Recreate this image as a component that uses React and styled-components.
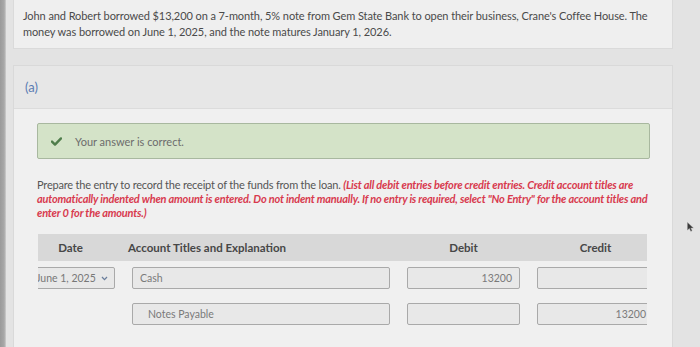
import React from 'react';
import styled, { createGlobalStyle } from 'styled-components';

const GlobalStyle = createGlobalStyle`
  html, body {
    margin: 0;
    padding: 0;
    background: #e4e4e4;
    font-family: Lato, "Open Sans", sans-serif;
    overflow: hidden;
  }
`;

const Page = styled.div`
  position: relative;
  width: 700px;
  height: 347px;
  display: flex;
  overflow: hidden;
  background: #e3e3e3;
`;

const Edge = styled.div`
  width: 6px;
  flex: none;
  background: linear-gradient(90deg, #9a9a9a 0%, #a8a8a8 70%, #cfcfcf 100%);
`;

const Column = styled.div`
  width: 660px;
  margin-left: 7px;
  display: flex;
  flex-direction: column;
  gap: 16px;
`;

const QuestionCard = styled.div`
  background: #efefef;
  border: 1px solid #dadada;
  border-top: none;
  padding: 8px 10px 8px 9px;
  font-size: 11px;
  line-height: 16px;
  color: #4a4a4a;
  letter-spacing: -0.08px;
`;

const PartCard = styled.div`
  display: flex;
  flex-direction: column;
  border: 1px solid #d9d9d9;
  border-bottom: none;
  flex: 1;
`;

const PartHeader = styled.div`
  height: 42px;
  display: flex;
  align-items: center;
  padding-left: 11px;
  background: #e7e7e7;
  border-bottom: 1px solid #dcdcdc;
  color: #5b7cb3;
  font-size: 13px;
`;

const PartBody = styled.div`
  flex: 1;
  background: #f0f0f0;
  padding: 14px 22px 0 23px;
  display: flex;
  flex-direction: column;
`;

const Feedback = styled.div`
  height: 34px;
  display: flex;
  align-items: center;
  gap: 13px;
  padding-left: 13px;
  background: #d4e3c8;
  border: 1px solid #a8b89f;
  border-radius: 2px;
  color: #6c6c6c;
  font-size: 11px;
`;

const Instructions = styled.p`
  margin: 19px 0 0;
  font-size: 11px;
  line-height: 14px;
  color: #555;
  letter-spacing: -0.2px;
  white-space: nowrap;
`;

const Note = styled.em`
  font-weight: 700;
  color: #d83a4e;
`;

const TableClip = styled.div`
  margin: 14px 0 0 1px;
  width: 609px;
  overflow: hidden;
`;

const HeaderBand = styled.div`
  display: grid;
  grid-template-columns: 77px 258px 113px 117px;
  column-gap: 17px;
  height: 27px;
  align-items: center;
  background: #d8d8d8;
  margin-bottom: 6px;
`;

const HeadCell = styled.div`
  font-size: 11.5px;
  font-weight: 700;
  color: #474747;
  text-align: ${p => (p.$left ? 'left' : 'center')};
  margin-left: ${p => p.$shift || 0}px;
`;

const Rows = styled.div`
  margin-left: -10px;
  display: grid;
  grid-template-columns: 87px 258px 113px 117px;
  column-gap: 17px;
  row-gap: 14px;
`;

const Field = styled.div`
  height: 22px;
  box-sizing: border-box;
  display: flex;
  align-items: center;
  justify-content: ${p => (p.$right ? 'flex-end' : 'flex-start')};
  padding: 0 ${p => (p.$right ? '7px' : '6px')} 0 ${p => p.$indent || 7}px;
  background: #e8e8e8;
  border: 1px solid #a9a9a9;
  border-radius: 2px;
  color: #7a7a7a;
  font-size: 10.5px;
  white-space: nowrap;
`;

const SelectField = styled(Field)`
  justify-content: space-between;
  padding: 0 6px 0 7px;
  color: #777;
`;

const Spacer = styled.div``;

const Cursor = styled.svg`
  position: absolute;
  left: 687px;
  top: 222px;
`;

function Check() {
  return (
    <svg width="11" height="9" viewBox="0 0 11 9">
      <path d="M1 4.6 L4 7.6 L10 1.4" fill="none" stroke="#4f7d4b" strokeWidth="2.4" strokeLinecap="round" strokeLinejoin="round" />
    </svg>
  );
}

function Chevron() {
  return (
    <svg width="7" height="5" viewBox="0 0 7 5">
      <path d="M1 1 L3.5 3.6 L6 1" fill="none" stroke="#6a7e9c" strokeWidth="1.3" />
    </svg>
  );
}

export default function App() {
  return (
    <>
      <GlobalStyle />
      <Page>
        <Edge />
        <Column>
          <QuestionCard>
            John and Robert borrowed $13,200 on a 7-month, 5% note from Gem State Bank to open their business, Crane's Coffee House. The
            <br />
            money was borrowed on June 1, 2025, and the note matures January 1, 2026.
          </QuestionCard>
          <PartCard>
            <PartHeader>(a)</PartHeader>
            <PartBody>
              <Feedback>
                <Check />
                <span>Your answer is correct.</span>
              </Feedback>
              <Instructions>
                Prepare the entry to record the receipt of the funds from the loan. <Note>(List all debit entries before credit entries. Credit account titles are
                <br />
                automatically indented when amount is entered. Do not indent manually. If no entry is required, select "No Entry" for the account titles and
                <br />
                enter 0 for the amounts.)</Note>
              </Instructions>
              <TableClip>
                <HeaderBand>
                  <HeadCell $shift={-12}>Date</HeadCell>
                  <HeadCell $left $shift={-4}>Account Titles and Explanation</HeadCell>
                  <HeadCell>Debit</HeadCell>
                  <HeadCell>Credit</HeadCell>
                </HeaderBand>
                <Rows>
                  <SelectField>
                    <span>June 1, 2025</span>
                    <Chevron />
                  </SelectField>
                  <Field>Cash</Field>
                  <Field $right>13200</Field>
                  <Field />

                  <Spacer />
                  <Field $indent={15}>Notes Payable</Field>
                  <Field />
                  <Field $right>13200</Field>
                </Rows>
              </TableClip>
            </PartBody>
          </PartCard>
        </Column>
        <Cursor width="7" height="10" viewBox="0 0 7 10">
          <path d="M0.5 0.5 L0.5 8 L2.4 6.3 L3.8 9.3 L5 8.8 L3.7 5.9 L6.3 5.9 Z" fill="#3a3a3a" stroke="#888" strokeWidth="0.4" />
        </Cursor>
      </Page>
    </>
  );
}
